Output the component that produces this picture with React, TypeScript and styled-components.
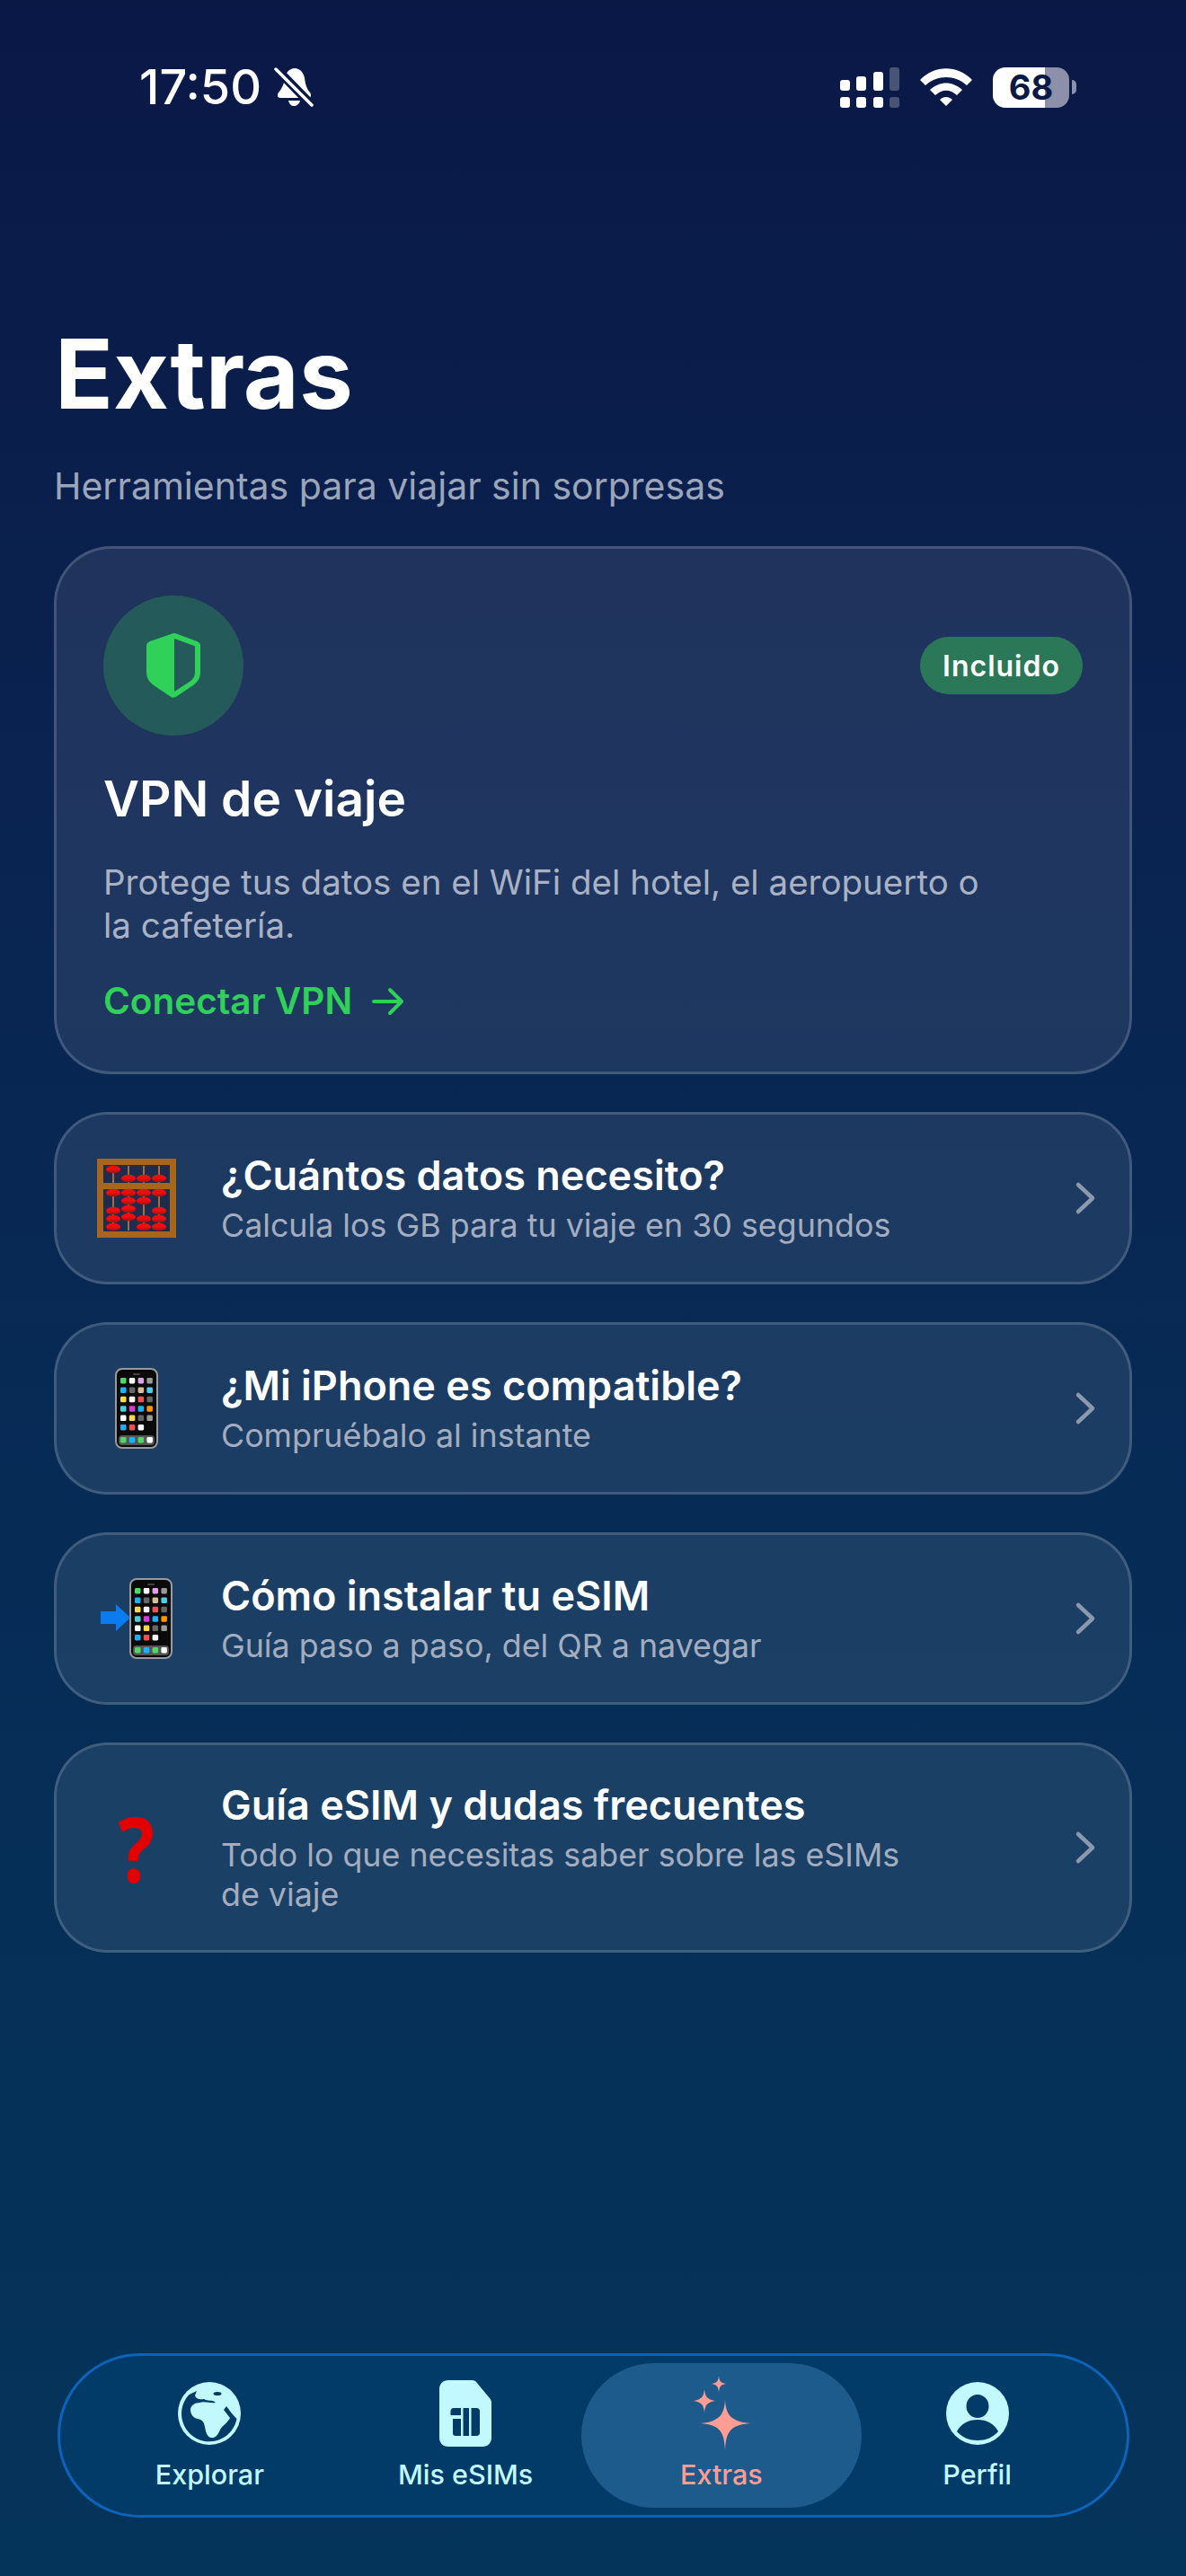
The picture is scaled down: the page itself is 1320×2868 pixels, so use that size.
import React from "react";
import styled, { createGlobalStyle } from "styled-components";

const GlobalStyle = createGlobalStyle`
	html, body {
		margin: 0;
		padding: 0;
		background: #0a1946;
	}
	* {
		box-sizing: border-box;
	}
`;

const Page = styled.div`
	width: 1320px;
	height: 2868px;
	display: flex;
	flex-direction: column;
	padding: 0 60px 65px;
	font-family: Inter, "Liberation Sans", sans-serif;
	color: #fff;
	background: linear-gradient(180deg, #0a1846 0%, #0a2350 30%, #062c56 60%, #05345a 100%);
	overflow: hidden;
`;

const StatusBar = styled.div`
	height: 120px;
	padding: 74px 62px 0 95px;
	display: flex;
	justify-content: space-between;
	align-items: center;
`;

const TimeGroup = styled.div`
	display: flex;
	align-items: center;
	gap: 14px;
	font-size: 54px;
	font-weight: 500;
	line-height: 50px;
`;

const StatusIcons = styled.div`
	display: flex;
	align-items: center;
	gap: 23px;
`;

const Battery = styled.div`
	display: flex;
	align-items: center;
	gap: 3px;
`;

const BatteryBody = styled.div`
	width: 85px;
	height: 45px;
	border-radius: 14px;
	background: linear-gradient(90deg, #fff 0 68%, #8c90a8 68% 100%);
	color: #0a1946;
	font-size: 38px;
	font-weight: 700;
	line-height: 45px;
	text-align: center;
`;

const BatteryCap = styled.div`
	width: 5px;
	height: 16px;
	border-radius: 0 6px 6px 0;
	background: #8c90a8;
`;

const Title = styled.h1`
	margin: 233px 0 0;
	padding-left: 1px;
	font-size: 107px;
	line-height: 126px;
	font-weight: 700;
`;

const Subtitle = styled.p`
	margin: 38px 0 43px;
	padding-left: 0;
	font-size: 41px;
	line-height: 48px;
	color: #9aa5ba;
`;

const VpnCard = styled.section`
	height: 588px;
	padding: 52px 52px 0;
	border-radius: 64px;
	border: 3px solid rgba(255, 255, 255, 0.16);
	background: rgba(255, 255, 255, 0.085);
`;

const VpnTop = styled.div`
	display: flex;
	justify-content: space-between;
	align-items: center;
`;

const ShieldCircle = styled.div`
	width: 156px;
	height: 156px;
	border-radius: 50%;
	background: #245b5a;
	display: flex;
	align-items: center;
	justify-content: center;
`;

const Badge = styled.span`
	width: 181px;
	height: 64px;
	border-radius: 32px;
	background: #2a7858;
	font-size: 32px;
	font-weight: 600;
	letter-spacing: 1px;
	display: flex;
	align-items: center;
	justify-content: center;
`;

const VpnTitle = styled.h2`
	margin: 38px 0 0;
	font-size: 55px;
	line-height: 64px;
	font-weight: 600;
`;

const VpnDesc = styled.p`
	margin: 37px 0 0;
	width: 985px;
	font-size: 38.5px;
	line-height: 48px;
	color: #a9b2c4;
`;

const VpnLink = styled.div`
	margin-top: 37px;
	display: flex;
	align-items: center;
	gap: 22px;
	font-size: 40.5px;
	line-height: 48px;
	font-weight: 600;
	color: #30d158;
`;

const RowList = styled.div`
	margin-top: 42px;
	display: flex;
	flex-direction: column;
	gap: 42px;
`;

const Row = styled.div<{ $tall?: boolean }>`
	height: ${(p) => (p.$tall ? 234 : 192)}px;
	padding: 0 36px 0 45px;
	display: flex;
	align-items: center;
	border-radius: 60px;
	border: 3px solid rgba(255, 255, 255, 0.16);
	background: rgba(255, 255, 255, 0.085);
`;

const RowIcon = styled.div`
	width: 88px;
	height: 92px;
	flex-shrink: 0;
	display: flex;
	align-items: center;
	justify-content: center;
`;

const QuestionMark = styled.span`
	font-family: "Open Sans", sans-serif;
	font-size: 100px;
	line-height: 92px;
	font-weight: 700;
	color: #e30000;
	transform: scaleX(0.85);
`;

const RowText = styled.div`
	margin-left: 50px;
	flex: 1;
`;

const RowTitle = styled.div`
	font-size: 45px;
	line-height: 54px;
	font-weight: 600;
`;

const RowSub = styled.div`
	margin-top: 6px;
	width: 780px;
	font-size: 35.8px;
	line-height: 44px;
	color: #a3adbf;
`;

const Chevron = styled.svg`
	flex-shrink: 0;
	width: 26px;
	height: 38px;
`;

const TabBar = styled.nav`
	margin-top: auto;
	margin-left: 4px;
	width: 1193px;
	height: 183px;
	padding: 8px 24px;
	display: grid;
	grid-template-columns: repeat(4, 1fr);
	border-radius: 92px;
	border: 3px solid #0b64b9;
	background: #023a68;
`;

const Tab = styled.div<{ $active?: boolean }>`
	margin: ${(p) => (p.$active ? "0 -14px" : "0")};
	padding-top: 14px;
	display: flex;
	flex-direction: column;
	align-items: center;
	border-radius: 81px;
	background: ${(p) => (p.$active ? "#1c5b8b" : "transparent")};
	color: ${(p) => (p.$active ? "#ff9c94" : "#c2f9ff")};
`;

const TabIcon = styled.div`
	height: 84px;
	display: flex;
	align-items: center;
	justify-content: center;
`;

const TabLabel = styled.span`
	margin-top: 6px;
	font-size: 30.5px;
	line-height: 40px;
	font-weight: 500;
`;

const BellSlash = () => (
	<svg width="44" height="44" viewBox="0 0 44 44">
		<path d="M23 1c-6 0-10 5-11 11-1 7-3 11-7 16-2 3-1 6 2 6h31c3 0 4-3 2-6-4-5-5-9-6-16-1-6-5-11-11-11z" fill="#fff" />
		<path d="M16 37c1 4 3 6 6 6s6-2 7-6z" fill="#fff" />
		<path d="M2 1l40 41" stroke="#0a1946" strokeWidth="10" />
		<path d="M2 2l40 40" stroke="#fff" strokeWidth="3.500" strokeLinecap="round" />
	</svg>
);

const SignalIcon = () => {
	const tops = [
		{ x: 0, y: 14, h: 12, o: 1 },
		{ x: 18, y: 10, h: 16, o: 1 },
		{ x: 37, y: 5, h: 21, o: 1 },
		{ x: 55, y: 0, h: 26, o: 0.25 },
	];
	return (
		<svg width="66" height="45" viewBox="0 0 66 45">
			{tops.map((t) => (
				<g key={t.x} fill="#fff" opacity={t.o}>
					<rect x={t.x} y={t.y} width="11" height={t.h} rx="3" />
					<rect x={t.x} y="33" width="11" height="12" rx="3" />
				</g>
			))}
		</svg>
	);
};

const WifiIcon = () => (
	<svg width="58" height="42" viewBox="0 0 58 42">
		<path d="M0 13C16 -4 42 -4 58 13L52 19C39 7 19 7 6 19Z" fill="#fff" />
		<path d="M11 24C22 14 36 14 47 24L41 30C33 23 25 23 17 30Z" fill="#fff" />
		<path d="M22 35C26 31 32 31 36 35L29 42Z" fill="#fff" />
	</svg>
);

const Shield = () => (
	<svg width="60" height="72" viewBox="0 0 60 72">
		<path
			d="M30 0l-26 9c-2 1-4 2-4 5v29c0 7 3 11 8 15l18 12c3 2 5 2 8 0l18-12c5-4 8-8 8-15V14c0-3-2-4-4-5L32 0z"
			fill="#30d158"
		/>
		<path d="M31 6l22 8c1 0 1 1 1 2v27c0 5-2 8-6 11l-17 11z" fill="#245b5a" />
	</svg>
);

const ArrowRight = () => (
	<svg width="36" height="32" viewBox="0 0 36 32" fill="none" stroke="#30d158" strokeWidth="4" strokeLinecap="round" strokeLinejoin="round">
		<path d="M2 16h31M20 3l13 13-13 13" />
	</svg>
);

const abacusRods = [
	{ x: 18, beads: [12, 38, 58, 67, 76] },
	{ x: 35, beads: [22, 38, 47, 56, 65] },
	{ x: 52, beads: [22, 38, 47, 67, 76] },
	{ x: 69, beads: [22, 38, 58, 67, 76] },
];

const Abacus = () => (
	<svg width="88" height="88" viewBox="0 0 88 88">
		<defs>
			<linearGradient id="bead" x1="0" y1="0" x2="0" y2="1">
				<stop offset="0" stopColor="#d81414" />
				<stop offset="0.45" stopColor="#f40d0d" />
				<stop offset="1" stopColor="#a20f0f" />
			</linearGradient>
		</defs>
		<rect x="7" y="7" width="74" height="74" fill="#1e2c4e" />
		{abacusRods.map((r) => (
			<rect key={r.x} x={r.x - 1} y="8" width="2" height="72" fill="#a86a40" />
		))}
		<rect x="3.500" y="3.500" width="81" height="81" fill="none" stroke="#a8661c" strokeWidth="7" />
		<rect x="7" y="27" width="74" height="7" fill="#a8661c" />
		{abacusRods.map((r) =>
			r.beads.map((y) => <ellipse key={`${r.x}-${y}`} cx={r.x} cy={y} rx="8" ry="4.300" fill="url(#bead)" />)
		)}
	</svg>
);

const appColors = [
	"#4cd964", "#fff", "#e0a0e8", "#999",
	"#1ab2f5", "#666", "#d9bd94", "#4ad0e8",
	"#ffd84a", "#fff", "#ef5350", "#666",
	"#4ad0d8", "#d040d0", "#1ab2f5", "#ff9500",
	"#fff", "#ffd84a", "#666", "#999",
	"#1ab2f5", "#ef5350", "#fff", "transparent",
];

const dockColors = ["#4cd964", "#1ab2f5", "#4cd964", "#fff"];

const PhoneGlyph = () => (
	<g>
		<rect x="1" y="1" width="46" height="88" rx="7" fill="#0a0a0a" stroke="#9a9a9a" strokeWidth="2" />
		<rect x="20" y="6" width="8" height="2" rx="1" fill="#444" />
		{appColors.map((c, i) => (
			<rect key={i} x={6 + (i % 4) * 9.8} y={11 + Math.floor(i / 4) * 10.4} width="6.5" height="6.5" rx="1.4" fill={c} />
		))}
		<rect x="4" y="75" width="40" height="11" rx="4" fill="#555" />
		{dockColors.map((c, i) => (
			<rect key={i} x={6 + i * 9.8} y="77" width="6.5" height="6.5" rx="1.4" fill={c} />
		))}
	</g>
);

const Phone = () => (
	<svg width="48" height="90" viewBox="0 0 48 90">
		<PhoneGlyph />
	</svg>
);

const PhoneArrow = () => (
	<svg width="80" height="90" viewBox="0 0 80 90">
		<g transform="translate(32 0)">
			<PhoneGlyph />
		</g>
		<path d="M0 37h17V29l16 15-16 15v-8H0z" fill="#0a7cf0" />
	</svg>
);

const GlobeIcon = () => (
	<svg width="70" height="70" viewBox="0 0 70 70">
		<circle cx="35" cy="35" r="35" fill="currentColor" />
		<path
			d="M12.500 14A31 31 0 1 0 65.500 41L60 35L54 27L51 31L58 40C55 46 50 48 47 53C45 58 42 63 37 62C32 61 31 55 30 50C29 44 27 42 22 41C17 40 14 36 14 31C14 26 19 23 24 23C30 21 36 24 42 23C38 19 33 22 29 19C25 20 20 19 19 15L21 10Z"
			fill="#023a68"
		/>
		<ellipse cx="44" cy="13" rx="4.500" ry="2" fill="#023a68" />
	</svg>
);

const SimIcon = () => (
	<svg width="58" height="74" viewBox="0 0 58 74">
		<path d="M10 0h27c2 0 3 1 4 2l15 18c1 1 2 3 2 5v39c0 6-4 10-10 10H10C4 74 0 70 0 64V10C0 4 4 0 10 0z" fill="currentColor" />
		<path d="M16 31h8v8H12.500v-4.500c0-2 1.500-3.500 3.500-3.500z" fill="#023a68" />
		<path d="M15 43h9v19h-6c-2 0-3-1-3-3z" fill="#023a68" />
		<path d="M26.500 31h6.500v31h-6.500z" fill="#023a68" />
		<path d="M35.500 31h6c2 0 3.500 1.500 3.500 3.500v24c0 2-1.500 3.500-3.500 3.500h-6z" fill="#023a68" />
	</svg>
);

const SparklesIcon = () => (
	<svg width="66" height="84" viewBox="0 0 66 84">
		<path d="M37 27c1 15 5 24 28 26-23 2-27 10-28 30-1-20-5-28-27-30 22-2 26-11 27-26z" fill="currentColor" />
		<path d="M14 15c1 8 2 11 12 13-10 2-11 5-12 13-1-8-2-11-12-13 10-2 11-5 12-13z" fill="currentColor" />
		<path d="M30 0c.5 6 2 8 8 9-6 1-7.500 3-8 10-.5-7-2-9-8-10 6-1 7.500-3 8-9z" fill="currentColor" />
	</svg>
);

const ProfileIcon = () => (
	<svg width="70" height="70" viewBox="0 0 70 70">
		<circle cx="35" cy="35" r="35" fill="currentColor" />
		<ellipse cx="35" cy="27" rx="12.500" ry="13" fill="#023a68" />
		<path d="M12 55c5-9 13-13 23-13s18 4 23 13c-6 7-14 10-23 10s-17-3-23-10z" fill="#023a68" />
	</svg>
);

const rows = [
	{ icon: <Abacus />, title: "¿Cuántos datos necesito?", sub: "Calcula los GB para tu viaje en 30 segundos" },
	{ icon: <Phone />, title: "¿Mi iPhone es compatible?", sub: "Compruébalo al instante" },
	{ icon: <PhoneArrow />, title: "Cómo instalar tu eSIM", sub: "Guía paso a paso, del QR a navegar" },
	{
		icon: <QuestionMark>?</QuestionMark>,
		title: "Guía eSIM y dudas frecuentes",
		sub: "Todo lo que necesitas saber sobre las eSIMs de viaje",
		tall: true,
	},
];

const tabs = [
	{ label: "Explorar", icon: <GlobeIcon /> },
	{ label: "Mis eSIMs", icon: <SimIcon /> },
	{ label: "Extras", icon: <SparklesIcon />, active: true },
	{ label: "Perfil", icon: <ProfileIcon /> },
];

export default function App() {
	return (
		<Page>
			<GlobalStyle />
			<StatusBar>
				<TimeGroup>
					17:50
					<BellSlash />
				</TimeGroup>
				<StatusIcons>
					<SignalIcon />
					<WifiIcon />
					<Battery>
						<BatteryBody>68</BatteryBody>
						<BatteryCap />
					</Battery>
				</StatusIcons>
			</StatusBar>

			<Title>Extras</Title>
			<Subtitle>Herramientas para viajar sin sorpresas</Subtitle>

			<VpnCard>
				<VpnTop>
					<ShieldCircle>
						<Shield />
					</ShieldCircle>
					<Badge>Incluido</Badge>
				</VpnTop>
				<VpnTitle>VPN de viaje</VpnTitle>
				<VpnDesc>Protege tus datos en el WiFi del hotel, el aeropuerto o la cafetería.</VpnDesc>
				<VpnLink>
					Conectar VPN
					<ArrowRight />
				</VpnLink>
			</VpnCard>

			<RowList>
				{rows.map((r) => (
					<Row key={r.title} $tall={r.tall}>
						<RowIcon>{r.icon}</RowIcon>
						<RowText>
							<RowTitle>{r.title}</RowTitle>
							<RowSub>{r.sub}</RowSub>
						</RowText>
						<Chevron viewBox="0 0 26 38" fill="none" stroke="#8c98ac" strokeWidth="4.500" strokeLinecap="round" strokeLinejoin="round">
							<path d="M5 4l16 15-16 15" />
						</Chevron>
					</Row>
				))}
			</RowList>

			<TabBar>
				{tabs.map((t) => (
					<Tab key={t.label} $active={t.active}>
						<TabIcon>{t.icon}</TabIcon>
						<TabLabel>{t.label}</TabLabel>
					</Tab>
				))}
			</TabBar>
		</Page>
	);
}
